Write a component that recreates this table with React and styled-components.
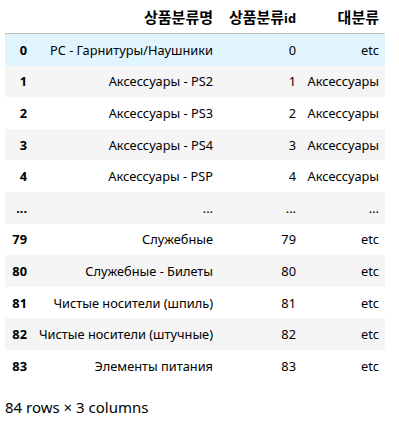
import React from "react";
import styled, { createGlobalStyle } from "styled-components";

const Global = createGlobalStyle`
  html, body { margin: 0; padding: 0; background: #fff; }
  body {
    font-family: "Noto Sans", "Noto Sans CJK KR", sans-serif;
    font-size: 12.8px;
    color: #000;
  }
`;

const Wrap = styled.div`
  padding: 0 5px;
`;

const Table = styled.table`
  border-collapse: collapse;
  border-spacing: 0;
  table-layout: fixed;
  width: 380px;
`;

const HeadCell = styled.th`
  height: 33px;
  padding: 0 ${(p) => (p.$index ? 8 : 6)}px 0 0;
  text-align: right;
  font-weight: 700;
  vertical-align: middle;
  border-bottom: 1px solid #bdbdbd;
  white-space: nowrap;
`;

const Hangul = styled.span`
  font-family: "Noto Sans CJK KR", sans-serif;
  font-size: 15px;
`;

const Row = styled.tr`
  background: ${(p) => (p.$hover ? "#e1f5fe" : p.$odd ? "#f5f5f5" : "#fff")};
`;

const IndexCell = styled.th`
  height: 31.6px;
  padding: 0 8px 0 0;
  text-align: right;
  font-weight: 700;
  vertical-align: middle;
  white-space: nowrap;
`;

const Cell = styled.td`
  height: 31.6px;
  padding: 0 6px 0 0;
  text-align: right;
  vertical-align: middle;
  white-space: nowrap;
`;

const Footer = styled.p`
  margin: 15px 0 0;
  font-size: 15px;
  line-height: 20px;
`;

const rows = [
  ["0", "PC - Гарнитуры/Наушники", "0", "etc"],
  ["1", "Аксессуары - PS2", "1", "Аксессуары"],
  ["2", "Аксессуары - PS3", "2", "Аксессуары"],
  ["3", "Аксессуары - PS4", "3", "Аксессуары"],
  ["4", "Аксессуары - PSP", "4", "Аксессуары"],
  ["...", "...", "...", "..."],
  ["79", "Служебные", "79", "etc"],
  ["80", "Служебные - Билеты", "80", "etc"],
  ["81", "Чистые носители (шпиль)", "81", "etc"],
  ["82", "Чистые носители (штучные)", "82", "etc"],
  ["83", "Элементы питания", "83", "etc"],
];

export default function App() {
  return (
    <Wrap>
      <Global />
      <Table>
        <colgroup>
          <col style={{ width: 30 }} />
          <col style={{ width: 184 }} />
          <col style={{ width: 83 }} />
          <col style={{ width: 83 }} />
        </colgroup>
        <thead>
          <tr>
            <HeadCell $index></HeadCell>
            <HeadCell><Hangul>상품분류명</Hangul></HeadCell>
            <HeadCell><Hangul>상품분류</Hangul>id</HeadCell>
            <HeadCell><Hangul>대분류</Hangul></HeadCell>
          </tr>
        </thead>
        <tbody>
          {rows.map((r, i) => (
            <Row key={i} $hover={i === 0} $odd={i % 2 === 1}>
              <IndexCell>{r[0]}</IndexCell>
              <Cell>{r[1]}</Cell>
              <Cell>{r[2]}</Cell>
              <Cell>{r[3]}</Cell>
            </Row>
          ))}
        </tbody>
      </Table>
      <Footer>84 rows × 3 columns</Footer>
    </Wrap>
  );
}
